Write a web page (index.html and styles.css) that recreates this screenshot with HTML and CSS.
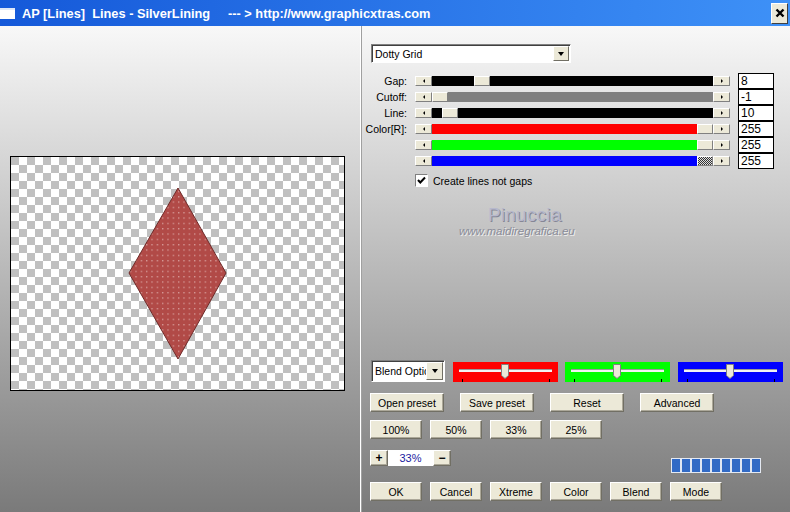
FILE: index.html
```html
<!DOCTYPE html>
<html>
<head>
<meta charset="utf-8">
<title>AP [Lines] Lines - SilverLining</title>
<link rel="stylesheet" href="styles.css">
</head>
<body>
<div class="window">
  <div class="titlebar">
    <span class="ticon"></span>
    <span class="ttext">AP [Lines]  Lines - SilverLining     --- &gt; http://www.graphicxtras.com</span>
    <span class="tclose"><svg width="10" height="10" viewBox="0 0 10 10"><path d="M1.5 1.5 L8.5 8.5 M8.5 1.5 L1.5 8.5" stroke="#000" stroke-width="2.4"/></svg></span>
  </div>
  <div class="main">
    <div class="left">
      <div class="preview">
        <svg width="333" height="233" viewBox="0 0 333 233">
          <defs>
            <pattern id="chk" width="16" height="16" patternUnits="userSpaceOnUse">
              <rect width="16" height="16" fill="#ffffff"/>
              <rect width="8" height="8" fill="#c0c0c0"/>
              <rect x="8" y="8" width="8" height="8" fill="#c0c0c0"/>
            </pattern>
            <pattern id="dots" width="5.33" height="5.33" patternUnits="userSpaceOnUse">
              <rect width="5.33" height="5.33" fill="#b14a47"/>
              <rect x="2" y="2" width="1" height="1" fill="#f2d6d4"/>
            </pattern>
          </defs>
          <rect width="333" height="233" fill="url(#chk)"/>
          <polygon points="167,31 215,116 167,202 118,116" fill="url(#dots)" stroke="#6e2a28" stroke-width="1"/>
        </svg>
      </div>
    </div>
    <div class="right">
      <div class="dd">
        <span class="dd-text">Dotty Grid</span>
        <span class="dd-btn"></span>
      </div>
      <div class="sliders">
        <div class="srow">
          <span class="slabel">Gap:</span>
          <span class="sbtn l"></span>
          <span class="track black"><i class="fill" style="width:42px"></i><b class="thumb"></b><i class="rest"></i></span>
          <span class="sbtn r"></span>
          <span class="val">8</span>
        </div>
        <div class="srow">
          <span class="slabel">Cutoff:</span>
          <span class="sbtn l"></span>
          <span class="track gray"><i class="fill" style="width:0px"></i><b class="thumb"></b><i class="rest"></i></span>
          <span class="sbtn r"></span>
          <span class="val">-1</span>
        </div>
        <div class="srow">
          <span class="slabel">Line:</span>
          <span class="sbtn l"></span>
          <span class="track black"><i class="fill" style="width:10px"></i><b class="thumb"></b><i class="rest"></i></span>
          <span class="sbtn r"></span>
          <span class="val">10</span>
        </div>
        <div class="srow">
          <span class="slabel">Color[R]:</span>
          <span class="sbtn l"></span>
          <span class="track red"><i class="fill" style="width:265px"></i><b class="thumb"></b><i class="rest"></i></span>
          <span class="sbtn r"></span>
          <span class="val">255</span>
        </div>
        <div class="srow">
          <span class="slabel"></span>
          <span class="sbtn l"></span>
          <span class="track green"><i class="fill" style="width:265px"></i><b class="thumb"></b><i class="rest"></i></span>
          <span class="sbtn r"></span>
          <span class="val">255</span>
        </div>
        <div class="srow">
          <span class="slabel"></span>
          <span class="sbtn l"></span>
          <span class="track blue"><i class="fill" style="width:265px"></i><b class="thumb focus"></b><i class="rest"></i></span>
          <span class="sbtn r"></span>
          <span class="val">255</span>
        </div>
      </div>
      <div class="checkrow">
        <span class="cbox"><svg width="11" height="11" viewBox="0 0 11 11"><path d="M2 5 L4.3 7.5 L9 2.5" stroke="#000" stroke-width="2" fill="none"/></svg></span>
        <span>Create lines not gaps</span>
      </div>
      <div class="watermark">
        <div class="wm1">Pinuccia</div>
        <div class="wm2">www.maidiregrafica.eu</div>
      </div>

      <div class="bottom">
        <div class="blendrow">
          <div class="bsel"><span class="bsel-text">Blend Optic</span><span class="dd-btn big"></span></div>
          <div class="cbox-s first">
            <svg width="105" height="20" viewBox="0 0 105 20"><rect width="105" height="20" fill="#ff0000"/><rect x="6" y="7" width="93" height="3" fill="#f2f2f2"/><rect x="6" y="7" width="93" height="1" fill="#9a9a9a"/><path d="M48.5 2.5 H55.5 V13.5 L52 16.5 L48.5 13.5 Z" fill="#ece9d8" stroke="#808080"/><rect x="9" y="17" width="1" height="3" fill="#000"/><rect x="96" y="17" width="1" height="3" fill="#000"/></svg>
          </div>
          <div class="cbox-s">
            <svg width="105" height="20" viewBox="0 0 105 20"><rect width="105" height="20" fill="#00ff00"/><rect x="6" y="7" width="93" height="3" fill="#f2f2f2"/><rect x="6" y="7" width="93" height="1" fill="#9a9a9a"/><path d="M48.5 2.5 H55.5 V13.5 L52 16.5 L48.5 13.5 Z" fill="#ece9d8" stroke="#808080"/><rect x="9" y="17" width="1" height="3" fill="#000"/><rect x="96" y="17" width="1" height="3" fill="#000"/></svg>
          </div>
          <div class="cbox-s third">
            <svg width="105" height="20" viewBox="0 0 105 20"><rect width="105" height="20" fill="#0000ff"/><rect x="6" y="7" width="93" height="3" fill="#f2f2f2"/><rect x="6" y="7" width="93" height="1" fill="#9a9a9a"/><path d="M48.5 2.5 H55.5 V13.5 L52 16.5 L48.5 13.5 Z" fill="#ece9d8" stroke="#808080"/><rect x="9" y="17" width="1" height="3" fill="#000"/><rect x="96" y="17" width="1" height="3" fill="#000"/></svg>
          </div>
        </div>
        <div class="row row1">
          <span class="btn w74">Open preset</span>
          <span class="btn w74">Save preset</span>
          <span class="btn w74">Reset</span>
          <span class="btn w74">Advanced</span>
        </div>
        <div class="row row2">
          <span class="btn w52">100%</span>
          <span class="btn w52">50%</span>
          <span class="btn w52">33%</span>
          <span class="btn w52">25%</span>
        </div>
        <div class="row row3">
          <span class="btn pm">+</span>
          <span class="zoomfield">33%</span>
          <span class="btn pm">−</span>
          <span class="progress"></span>
        </div>
        <div class="row row4">
          <span class="btn w52">OK</span>
          <span class="btn w52">Cancel</span>
          <span class="btn w52">Xtreme</span>
          <span class="btn w52">Color</span>
          <span class="btn w52">Blend</span>
          <span class="btn w52">Mode</span>
        </div>
      </div>
    </div>
  </div>
</div>
</body>
</html>
```
FILE: styles.css
```css
* { box-sizing: border-box; }
html, body { margin: 0; padding: 0; }
body {
  width: 790px;
  height: 512px;
  overflow: hidden;
  font-family: "Liberation Sans", Arial, sans-serif;
  font-size: 10.5px;
  color: #000;
}
.window {
  width: 790px;
  height: 512px;
  display: flex;
  flex-direction: column;
}
.titlebar {
  height: 26px;
  flex: none;
  display: flex;
  align-items: center;
  background: linear-gradient(to right, #1559d9, #3e91f7);
  color: #fff;
}
.ticon {
  width: 15px;
  height: 11px;
  background: #fff;
  border-top: 2px solid #dfe8f8;
  margin-right: 7px;
  flex: none;
}
.ttext {
  font-weight: bold;
  font-size: 12.8px;
  white-space: pre;
  flex: 1;
}
.tclose {
  width: 17px;
  height: 21px;
  margin-right: 2px;
  background: #ece9d8;
  border: 1px solid;
  border-color: #fff #404040 #404040 #fff;
  display: flex;
  align-items: center;
  justify-content: center;
}
.tclose svg { display: block; }

.main {
  flex: 1;
  display: flex;
  background: linear-gradient(#f8f8f8, #7a7a7a);
}
.left {
  width: 361px;
  flex: none;
  border-right: 1px solid #fff;
  padding: 130px 0 0 10px;
}
.preview {
  width: 335px;
  height: 235px;
  border: 1px solid #000;
  background: #fff;
}
.preview svg { display: block; }

.right {
  flex: 1;
  border-left: 1px solid #a0a0a0;
  display: flex;
  flex-direction: column;
}

.dd {
  margin: 18px 0 0 9px;
  width: 200px;
  height: 19px;
  background: #fff;
  border: 1px solid;
  border-color: #808080 #fff #fff #808080;
  box-shadow: inset 1px 1px 0 #404040;
  display: flex;
  align-items: center;
  padding-left: 3px;
}
.dd-text { flex: 1; }
.dd-btn {
  width: 16px;
  height: 15px;
  margin-right: 1px;
  background: #ece9d8;
  border: 1px solid;
  border-color: #fff #716f64 #716f64 #fff;
  display: flex;
  align-items: center;
  justify-content: center;
  flex: none;
}
.dd-btn::before {
  content: "";
  border-style: solid;
  border-width: 4px 3.5px 0 3.5px;
  border-color: #000 transparent transparent transparent;
}
.dd-btn.big { width: 17px; height: 18px; }

.sliders {
  margin-top: 10px;
  display: flex;
  flex-direction: column;
}
.srow {
  height: 16px;
  display: flex;
  align-items: center;
}
.slabel {
  width: 53px;
  text-align: right;
  padding-right: 8px;
  flex: none;
}
.sbtn {
  width: 17px;
  height: 10px;
  flex: none;
  background: #ece9d8;
  border: 1px solid;
  border-color: #fff #808080 #808080 #fff;
  display: flex;
  align-items: center;
  justify-content: center;
}
.sbtn::before {
  content: "";
  border-style: solid;
}
.sbtn.l::before {
  border-width: 2px 2px 2px 0;
  border-color: transparent #000 transparent transparent;
}
.sbtn.r::before {
  border-width: 2px 0 2px 2px;
  border-color: transparent transparent transparent #000;
}
.track {
  width: 281px;
  height: 10px;
  flex: none;
  display: flex;
}
.track .fill { flex: none; display: block; height: 10px; }
.track .rest { flex: 1; display: block; height: 10px; }
.track.black { background: #000; }
.track.gray { background: #808080; }
.track.red { background: #ff0000; }
.track.green { background: #00ff00; }
.track.blue { background: #0000ff; }
.thumb {
  width: 16px;
  height: 10px;
  flex: none;
  display: block;
  background: #ece9d8;
  border: 1px solid;
  border-color: #fff #808080 #808080 #fff;
}
.thumb.focus {
  background: repeating-conic-gradient(#333 0 25%, #ddd 0 50%) 0 0 / 2px 2px;
}
.val {
  margin-left: 8px;
  width: 36px;
  height: 16px;
  flex: none;
  background: #fff;
  border: 1px solid #000;
  font-size: 12px;
  line-height: 14px;
  padding-left: 2px;
}

.checkrow {
  margin: 5px 0 0 53px;
  display: flex;
  align-items: center;
  gap: 5px;
  height: 13px;
}
.cbox {
  width: 13px;
  height: 13px;
  background: #fff;
  border: 1px solid;
  border-color: #808080 #fff #fff #808080;
  display: flex;
  align-items: center;
  justify-content: center;
}
.cbox svg { display: block; }

.watermark { margin-top: 18px; }
.wm1 {
  padding-left: 126px;
  font-size: 19px;
  line-height: 20px;
  color: #b6b8cc;
  text-shadow: 1px 1px 0 #858696;
  letter-spacing: 0.2px;
}
.wm2 {
  padding-left: 97px;
  font-size: 11.5px;
  line-height: 12px;
  font-style: italic;
  color: #8a8c98;
  text-shadow: 1px 1px 0 #eeeeee;
}

.bottom {
  margin-top: auto;
  padding-bottom: 11px;
  display: flex;
  flex-direction: column;
}
.blendrow {
  height: 22px;
  display: flex;
  align-items: flex-start;
  padding-left: 9px;
}
.bsel {
  width: 74px;
  height: 22px;
  background: #fff;
  border: 1px solid;
  border-color: #808080 #fff #fff #808080;
  box-shadow: inset 1px 1px 0 #404040;
  display: flex;
  align-items: center;
  padding-left: 3px;
  overflow: hidden;
}
.bsel-text {
  flex: 1;
  white-space: nowrap;
  overflow: hidden;
}
.cbox-s {
  margin-top: 2px;
  margin-left: 7px;
  width: 105px;
  height: 20px;
}
.cbox-s.first, .cbox-s.third { margin-left: 8px; }
.cbox-s svg { display: block; }

.row {
  display: flex;
  padding-left: 8px;
}
.row1 { margin-top: 11px; gap: 16px; }
.row2 { margin-top: 8px; gap: 8px; }
.row3 { margin-top: 11px; align-items: flex-start; height: 23px; }
.row4 { margin-top: 9px; gap: 8px; }

.btn {
  height: 19px;
  background: #ece9d8;
  border: 1px solid;
  border-color: #fff #716f64 #716f64 #fff;
  box-shadow: inset -1px -1px 0 #aca899;
  display: flex;
  align-items: center;
  justify-content: center;
  flex: none;
}
.w74 { width: 74px; }
.w52 { width: 52px; }
.btn.pm {
  width: 18px;
  height: 16px;
  font-weight: bold;
  font-size: 12px;
}
.zoomfield {
  width: 45px;
  height: 16px;
  background: #fff;
  color: #1a1aa0;
  font-size: 11px;
  display: flex;
  align-items: center;
  justify-content: center;
  flex: none;
}
.progress {
  margin: 8px 0 0 220px;
  width: 90px;
  height: 15px;
  flex: none;
  border: 1px solid #e4e9f2;
  background: repeating-linear-gradient(to right, #316ac5 0 8px, #dfe6f2 8px 10px);
}
```
